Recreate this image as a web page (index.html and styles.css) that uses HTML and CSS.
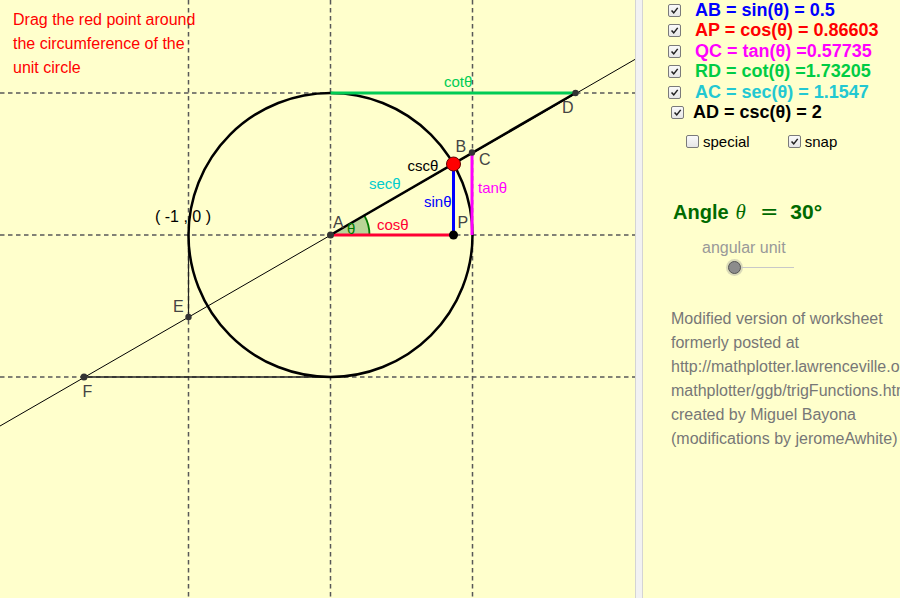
FILE: index.html
```html
<!DOCTYPE html>
<html>
<head>
<meta charset="utf-8">
<link rel="stylesheet" href="styles.css">
</head>
<body>
<div class="app">
  <div class="canvas">
    <svg class="diagram" viewBox="0 0 635 598" width="635" height="598">
      <g class="dash">
        <line x1="0" y1="93" x2="635" y2="93"/>
        <line x1="0" y1="235" x2="635" y2="235"/>
        <line x1="0" y1="377" x2="635" y2="377"/>
        <line x1="188.5" y1="0" x2="188.5" y2="598"/>
        <line x1="330.5" y1="0" x2="330.5" y2="598"/>
        <line x1="472.5" y1="0" x2="472.5" y2="598"/>
      </g>
      <line x1="0" y1="426" x2="635" y2="59.4" stroke="#000" stroke-width="1"/>
      <line x1="84" y1="377" x2="330.5" y2="377" stroke="#222" stroke-width="1.6"/>
      <line x1="188.5" y1="235" x2="188.5" y2="317" stroke="#222" stroke-width="1.2"/>
      <path d="M330.5,235 L369.5,235 A39,39 0 0,0 364.3,215.5 Z" fill="#b9d496" stroke="none"/>
      <path d="M369.5,235 A39,39 0 0,0 364.3,215.5" fill="none" stroke="#007a00" stroke-width="1.8"/>
      <circle cx="330.5" cy="235" r="142" fill="none" stroke="#000" stroke-width="2.5"/>
      <line x1="330.5" y1="93" x2="575.5" y2="93" stroke="#00cc55" stroke-width="3"/>
      <line x1="330.5" y1="235" x2="453.5" y2="235" stroke="#ff0033" stroke-width="3"/>
      <line x1="453.5" y1="164" x2="453.5" y2="235" stroke="#0000ff" stroke-width="3"/>
      <line x1="472" y1="152.5" x2="472" y2="235" stroke="#ff00ff" stroke-width="3"/>
      <line x1="330.5" y1="235" x2="575.5" y2="93" stroke="#000" stroke-width="2.6"/>
      <circle cx="330.5" cy="235" r="3.5" fill="#333"/>
      <circle cx="453.5" cy="235" r="4.5" fill="#000"/>
      <circle cx="472" cy="152.5" r="3.2" fill="#333"/>
      <circle cx="575.5" cy="93" r="3.2" fill="#333"/>
      <circle cx="188.5" cy="317" r="3.2" fill="#333"/>
      <circle cx="84" cy="377" r="3.5" fill="#333"/>
      <circle cx="453.5" cy="164" r="7" fill="#ff0000" stroke="#600" stroke-width="1"/>
      <g class="lbl">
        <text x="444" y="86.5" fill="#00cc55">cotθ</text>
        <text x="562" y="112.5" class="pt">D</text>
        <text x="455.5" y="151.5" class="pt" fill="#ff0000">B</text>
        <text x="479" y="165" class="pt">C</text>
        <text x="407.5" y="170.5" fill="#000">cscθ</text>
        <text x="369" y="188.5" fill="#00cccc">secθ</text>
        <text x="478" y="193" fill="#ff00ff">tanθ</text>
        <text x="424" y="206.5" fill="#0000ff">sinθ</text>
        <text x="155" y="221.5" fill="#000" class="coord">( -1 , 0 )</text>
        <text x="333" y="228" class="pt">A</text>
        <text x="347" y="234" fill="#007a00">θ</text>
        <text x="377" y="230" fill="#ff0033">cosθ</text>
        <text x="457.5" y="227.5" class="pt" fill="#000">P</text>
        <text x="173" y="311.5" class="pt">E</text>
        <text x="82.5" y="396.5" class="pt">F</text>
      </g>
    </svg>
    <p class="hint">Drag the red point around<br>the circumference of the<br>unit circle</p>
  </div>
  <div class="divider"></div>
  <div class="panel">
    <div class="rows">
      <div class="row c-blue"><span class="cb on"><svg viewBox="0 0 13 13"><path d="M3 6.5 L5.6 9.3 L10.3 3.4"/></svg></span><span>AB = sin(θ) = 0.5</span></div>
      <div class="row c-red"><span class="cb on"><svg viewBox="0 0 13 13"><path d="M3 6.5 L5.6 9.3 L10.3 3.4"/></svg></span><span>AP = cos(θ) = 0.86603</span></div>
      <div class="row c-mag row-tight"><span class="cb on"><svg viewBox="0 0 13 13"><path d="M3 6.5 L5.6 9.3 L10.3 3.4"/></svg></span><span>QC = tan(θ) =0.57735</span></div>
      <div class="row c-green row-tight"><span class="cb on"><svg viewBox="0 0 13 13"><path d="M3 6.5 L5.6 9.3 L10.3 3.4"/></svg></span><span>RD = cot(θ) =1.73205</span></div>
      <div class="row c-cyan"><span class="cb on"><svg viewBox="0 0 13 13"><path d="M3 6.5 L5.6 9.3 L10.3 3.4"/></svg></span><span>AC = sec(θ) = 1.1547</span></div>
      <div class="row c-black row-ad"><span class="cb on"><svg viewBox="0 0 13 13"><path d="M3 6.5 L5.6 9.3 L10.3 3.4"/></svg></span><span>AD = csc(θ) = 2</span></div>
    </div>
    <div class="options">
      <span class="cb"></span><span class="opt-label">special</span>
      <span class="cb on cb-snap"><svg viewBox="0 0 13 13"><path d="M3 6.5 L5.6 9.3 L10.3 3.4"/></svg></span><span class="opt-label">snap</span>
    </div>
    <div class="angle"><span class="sans">Angle</span><span class="theta">θ</span><span class="eq">=</span><span class="sans num">30°</span></div>
    <div class="unit-label">angular unit</div>
    <div class="slider"><span class="knob"></span><span class="track"></span></div>
    <div class="notes">
      <div>Modified version of worksheet</div>
      <div>formerly posted at</div>
      <div>http://mathplotter.lawrenceville.org/</div>
      <div>mathplotter/ggb/trigFunctions.html</div>
      <div>created by Miguel Bayona</div>
      <div>(modifications by jeromeAwhite)</div>
    </div>
  </div>
</div>
</body>
</html>
```

FILE: styles.css
```css
html, body {
  margin: 0;
  padding: 0;
  background: #ffffff;
  font-family: "Liberation Sans", Arial, sans-serif;
}
.app {
  display: flex;
  width: 900px;
  height: 598px;
  overflow: hidden;
}
.canvas {
  position: relative;
  width: 635px;
  height: 598px;
  background: #ffffcc;
  flex: none;
}
.diagram {
  position: absolute;
  left: 0;
  top: 0;
}
.dash line {
  stroke: #585858;
  stroke-width: 1.5;
  stroke-dasharray: 4.5 3.5;
}
.lbl text {
  font-family: "Liberation Sans", Arial, sans-serif;
  font-size: 15px;
}
.lbl text.pt {
  font-size: 16px;
  fill: #444;
}
.lbl text.coord {
  font-size: 16px;
}
.hint {
  position: relative;
  margin: 0;
  padding: 8px 0 0 13px;
  font-size: 16px;
  line-height: 24px;
  color: #ff0000;
}
.divider {
  flex: none;
  width: 6px;
  background: #f2f2f2;
  border-left: 1px solid #d4d4d4;
  border-right: 1px solid #d4d4d4;
}
.panel {
  flex: 1;
  background: #ffffcc;
  overflow: hidden;
  white-space: nowrap;
}
.rows {
  padding-left: 25px;
}
.row {
  display: flex;
  align-items: center;
  gap: 14px;
  height: 20.5px;
  font-weight: bold;
  font-size: 18px;
}
.row-ad {
  padding-left: 3px;
  gap: 9px;
}
.c-blue { color: #0000ff; }
.c-red { color: #ff0000; }
.c-mag { color: #ff00ff; }
.c-green { color: #00cc44; }
.c-cyan { color: #22c8d2; }
.c-black { color: #000; }
.cb {
  flex: none;
  box-sizing: border-box;
  width: 13px;
  height: 13px;
  border: 1px solid #7a7a7a;
  border-radius: 2px;
  background: linear-gradient(#fafafa, #e6e6e6);
  display: inline-block;
}
.cb svg {
  display: block;
  width: 11px;
  height: 11px;
}
.cb path {
  fill: none;
  stroke: #222;
  stroke-width: 1.8;
}
.options {
  display: flex;
  align-items: center;
  height: 20px;
  margin-top: 8px;
  padding-left: 43px;
  font-size: 15px;
  color: #000;
}
.opt-label {
  margin-left: 4px;
}
.cb-snap {
  margin-left: 38px;
}
.angle {
  margin-top: 49px;
  padding-left: 30px;
  height: 24px;
  line-height: 24px;
  color: #006a00;
  font-size: 20px;
  font-weight: bold;
}
.angle .theta {
  font-family: "Liberation Serif", "Times New Roman", serif;
  font-style: italic;
  font-weight: normal;
  font-size: 21px;
  margin-left: 7px;
}
.angle .eq {
  display: inline-block;
  font-family: "DejaVu Sans", sans-serif;
  font-weight: normal;
  font-size: 22px;
  margin: 0 12px 0 14px;
}
.angle .num {
  font-size: 21px;
}
.unit-label {
  margin-top: 12px;
  padding-left: 59px;
  height: 24px;
  line-height: 24px;
  font-size: 16px;
  color: #999;
}
.slider {
  display: flex;
  align-items: center;
  height: 14px;
  padding-left: 85px;
}
.knob {
  flex: none;
  box-sizing: border-box;
  width: 13px;
  height: 13px;
  border-radius: 50%;
  background: #8c8c8c;
  border: 1px solid #555;
  box-shadow: 0 0 0 2px rgba(150, 150, 150, 0.35);
}
.track {
  width: 53px;
  height: 1px;
  background: #c8c8c8;
}
.notes {
  margin-top: 33px;
  padding-left: 28px;
  font-size: 16px;
  line-height: 24px;
  color: #777;
}
```
